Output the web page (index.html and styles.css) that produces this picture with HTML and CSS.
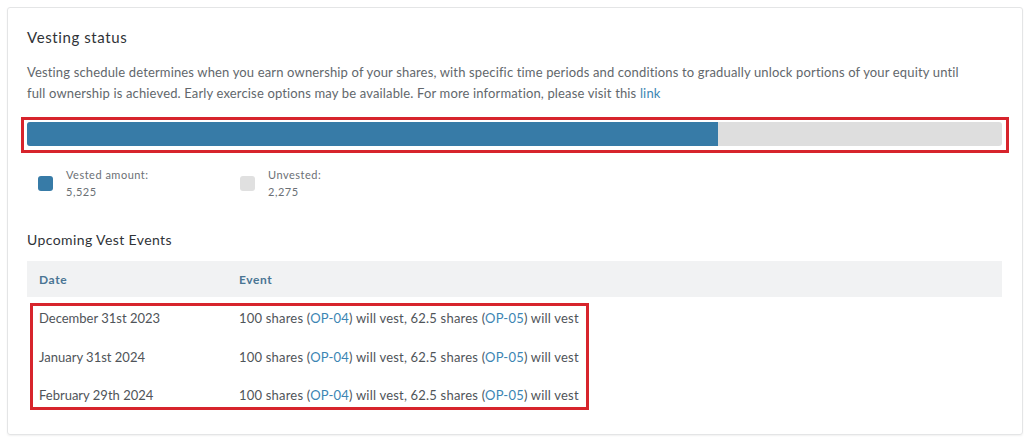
FILE: index.html
```html
<!DOCTYPE html>
<html>
<head>
<meta charset="utf-8">
<link rel="stylesheet" href="styles.css">
</head>
<body>
<div class="card">
  <h2 class="title">Vesting status</h2>
  <p class="desc">Vesting schedule determines when you earn ownership of your shares, with specific time periods and conditions to gradually unlock portions of your equity until full ownership is achieved. Early exercise options may be available. For more information, please visit this <a href="#" class="link">link</a></p>
  <div class="hl-bar">
    <div class="bar"><div class="bar-fill" style="width:70.83%"></div></div>
  </div>
  <div class="legend">
    <div class="legend-item">
      <span class="swatch swatch-vested"></span>
      <div class="legend-text"><div>Vested amount:</div><div>5,525</div></div>
    </div>
    <div class="legend-item">
      <span class="swatch swatch-unvested"></span>
      <div class="legend-text"><div>Unvested:</div><div>2,275</div></div>
    </div>
  </div>
  <h3 class="subtitle">Upcoming Vest Events</h3>
  <div class="table">
    <div class="thead">
      <div class="col-date">Date</div>
      <div class="col-event">Event</div>
    </div>
    <div class="tbody">
      <div class="row">
        <div class="col-date">December 31st 2023</div>
        <div class="col-event">100 shares (<a class="link" href="#">OP-04</a>) will vest, 62.5 shares (<a class="link" href="#">OP-05</a>) will vest</div>
      </div>
      <div class="row">
        <div class="col-date">January 31st 2024</div>
        <div class="col-event">100 shares (<a class="link" href="#">OP-04</a>) will vest, 62.5 shares (<a class="link" href="#">OP-05</a>) will vest</div>
      </div>
      <div class="row">
        <div class="col-date">February 29th 2024</div>
        <div class="col-event">100 shares (<a class="link" href="#">OP-04</a>) will vest, 62.5 shares (<a class="link" href="#">OP-05</a>) will vest</div>
      </div>
    </div>
  </div>
</div>
</body>
</html>
```

FILE: styles.css
```css
* { box-sizing: border-box; }
html, body { margin: 0; padding: 0; background: #ffffff; }
body {
  padding: 7px 6px 4px 7px;
  font-family: "Lato", "Open Sans", sans-serif;
  color: #555a5f;
}
.card {
  width: 1016px;
  height: 428px;
  border: 1px solid #e4e5e6;
  border-radius: 3px;
  box-shadow: 0 1px 2px rgba(0,0,0,0.06);
  padding: 20px 19px 0 19px;
}
.title {
  margin: 0;
  font-size: 15px;
  font-weight: 400;
  letter-spacing: 0.6px;
  color: #2f3337;
  line-height: 18px;
}
.desc {
  margin: 16px 0 0 0;
  width: 945px;
  font-size: 13px;
  letter-spacing: 0.15px;
  line-height: 21px;
  color: #62676c;
}
.link { color: #3b85b3; text-decoration: none; }
.hl-bar {
  margin: 13px 0 0 -6px;
  width: 988px;
  border: 3px solid #d7242c;
  padding: 2px 4px 4px 3px;
}
.bar {
  height: 24px;
  background: #dedede;
  border-radius: 3px;
  overflow: hidden;
}
.bar-fill { height: 100%; background: #377ba7; }
.legend {
  display: flex;
  margin: 13px 0 0 11px;
}
.legend-item {
  display: flex;
  align-items: center;
  gap: 13px;
  width: 202px;
}
.swatch {
  width: 15px;
  height: 15px;
  border-radius: 3px;
  flex: none;
}
.swatch-vested { background: #377ba7; }
.swatch-unvested { background: #e0e0e0; }
.legend-text {
  font-size: 11px;
  letter-spacing: 0.5px;
  line-height: 17px;
  color: #6b7075;
}
.subtitle {
  margin: 31px 0 0 0;
  font-size: 14px;
  font-weight: 400;
  letter-spacing: 0.4px;
  color: #2f3337;
  line-height: 18px;
}
.table { margin-top: 12px; width: 975px; }
.thead {
  display: flex;
  background: #f1f2f3;
  height: 36px;
  align-items: center;
  font-size: 12px;
  font-weight: 700;
  letter-spacing: 0.6px;
  color: #4a7593;
}
.col-date { width: 212px; padding-left: 12px; flex: none; }
.col-event { flex: 1; }
.tbody {
  margin: 6px 0 0 3px;
  width: 559px;
  border: 3px solid #d7242c;
  padding: 0;
  display: flex;
  flex-direction: column;
  gap: 14.5px;
}
.row {
  display: flex;
  height: 24px;
  align-items: center;
  font-size: 13px;
  letter-spacing: 0.2px;
  color: #4f5459;
}
.tbody .col-date { width: 206px; padding-left: 6px; letter-spacing: 0; }
```
